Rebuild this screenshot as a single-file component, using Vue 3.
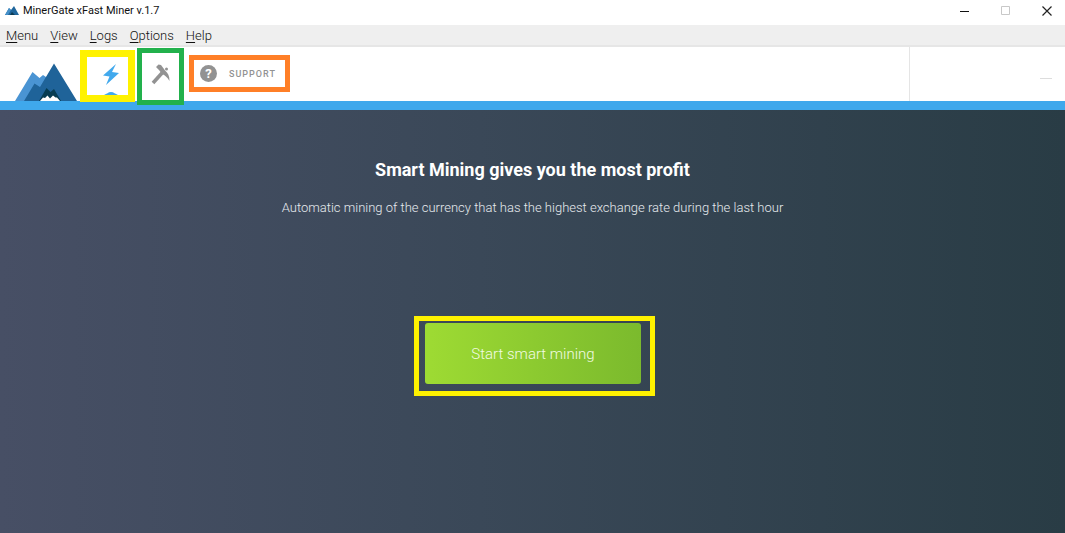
<script setup>
const menus = ['Menu', 'View', 'Logs', 'Options', 'Help']
</script>

<template>
  <div class="window">
    <header class="titlebar">
      <svg class="app-icon" viewBox="0 0 14 9" aria-hidden="true">
        <path d="M0 9 4 2 6 4 9 0 14 9Z" fill="#1f669c" />
        <path d="M0 9 4 2 6 4 3 9Z" fill="#4590c9" />
        <path d="M5 9 7 6 9 8 10 9Z" fill="#0c3c55" />
      </svg>
      <span class="app-title">MinerGate xFast Miner v.1.7</span>
      <div class="window-controls">
        <button type="button" aria-label="Minimize">
          <svg width="10" height="10" viewBox="0 0 10 10"><path d="M0 5.5H9" stroke="#111" /></svg>
        </button>
        <button type="button" aria-label="Maximize" disabled>
          <svg width="10" height="10" viewBox="0 0 10 10"><path d="M.5 .5H8.500V8.500H.5Z" fill="none" stroke="#c8c8c8" /></svg>
        </button>
        <button type="button" aria-label="Close">
          <svg width="10" height="10" viewBox="0 0 10 10"><path d="M.5 .5 9.500 9.500M9.500 .5 .5 9.500" stroke="#222" stroke-width="1.200" /></svg>
        </button>
      </div>
    </header>

    <nav class="menubar" aria-label="Application menu">
      <button v-for="m in menus" :key="m" type="button"><u>{{ m[0] }}</u>{{ m.slice(1) }}</button>
    </nav>

    <div class="toolbar">
      <svg class="logo" viewBox="0 0 62 38" role="img" aria-label="MinerGate">
        <path d="M0 38 17.500 9 24.500 15 28 12 34 16 30 38Z" fill="#4a94d3" />
        <path d="M9 38 19.500 20.500 25 24 39 .5 62 38Z" fill="#1f6399" />
        <path d="M24 38 31.500 25 35.500 29 39 26 46 38Z" fill="#063c52" />
        <path d="M25 38 28 34.500 30 35 32.500 32.500 35 35.500 38 32.500 40.500 34.500 42 34.500 45 38Z" fill="#fff" />
      </svg>
      <button class="tab smart" type="button" aria-label="Smart mining">
        <svg class="bolt" viewBox="0 0 16 21" aria-hidden="true">
          <path d="M13 0 0 11.500 6.500 12.500 3 21 16 9 9 8Z" fill="#42a9ed" />
        </svg>
        <svg class="marker" viewBox="0 0 14 4" aria-hidden="true">
          <path d="M0 4C3 3 4 1 7 1S11 3 14 4Z" fill="#42a9ed" />
        </svg>
      </button>
      <button class="tab miner" type="button" aria-label="Miner">
        <svg class="pick" viewBox="0 0 20 21" aria-hidden="true">
          <path d="M2 19 11 9" stroke="#929292" stroke-width="3.600" fill="none" />
          <path d="M5 3 7.500 .5 10 1 13 5 14 6.500C17 9 18.500 12 18.500 17C16 13 14 11 11 10L8 6Z" fill="#929292" />
          <circle cx="15.500" cy="5" r="1.500" fill="#929292" />
        </svg>
      </button>
      <button class="tab support" type="button">
        <span class="help" aria-hidden="true">?</span>
        <span>SUPPORT</span>
      </button>
      <aside class="account"><span class="dash"></span></aside>
    </div>

    <main class="stage">
      <h1>Smart Mining gives you the most profit</h1>
      <p>Automatic mining of the currency that has the highest exchange rate during the last hour</p>
      <div class="callout">
        <button class="start" type="button">Start smart mining</button>
      </div>
    </main>
  </div>
</template>

<style>
body {
  margin: 0;
}
</style>

<style scoped>
.window {
  display: flex;
  flex-direction: column;
  min-height: 100vh;
  background: #fff;
  font-family: Roboto, "Liberation Sans", sans-serif;
}
button {
  box-sizing: border-box;
  margin: 0;
  padding: 0;
  border: 0;
  background: none;
  font: inherit;
  color: inherit;
}
svg {
  display: block;
}
.titlebar {
  display: flex;
  align-items: center;
  height: 25px;
  padding: 0 13px 4px 5px;
  box-sizing: border-box;
}
.app-icon {
  width: 14px;
  height: 9px;
}
.app-title {
  margin-left: 4px;
  font-size: 11px;
  line-height: 16px;
  color: #111;
}
.window-controls {
  display: flex;
  gap: 31px;
  margin-left: auto;
}
.menubar {
  display: flex;
  gap: 12px;
  height: 22px;
  padding: 1px 6px 0;
  box-sizing: border-box;
  border-bottom: 2px solid #e6e6e6;
  background: #efefef;
  font-size: 13px;
  font-weight: 300;
  line-height: 19px;
  color: #111;
}
.menubar u {
  text-underline-offset: 2px;
}
.toolbar {
  display: flex;
  align-items: flex-start;
  height: 54px;
  padding-left: 15px;
  border-bottom: 9px solid #3fa8ec;
}
.logo {
  align-self: flex-end;
  width: 62px;
  height: 38px;
}
.tab {
  flex: none;
  background: #fff;
}
.smart {
  display: flex;
  flex-direction: column;
  align-items: center;
  justify-content: space-between;
  width: 55px;
  height: 52px;
  margin: 3px 0 0 3px;
  padding: 7px 0 0 7px;
  border: 7px solid #fff200;
}
.bolt {
  width: 16px;
  height: 21px;
}
.marker {
  width: 14px;
  height: 4px;
}
.miner {
  width: 47px;
  height: 57px;
  margin: 1px 0 0 2px;
  padding: 11px 0 0 9px;
  border: 5px solid #22b14c;
}
.miner .pick {
  width: 20px;
  height: 21px;
  margin-bottom: 15px;
}
.support {
  display: flex;
  align-items: center;
  gap: 12px;
  width: 101px;
  height: 37px;
  margin: 8px 0 0 5px;
  padding-left: 6px;
  border: 5px solid #ff7f27;
  font-size: 9px;
  font-weight: 500;
  letter-spacing: 1px;
  color: #929292;
}
.help {
  width: 17px;
  height: 17px;
  border-radius: 50%;
  background: #929292;
  color: #fff;
  font-size: 13px;
  font-weight: 700;
  line-height: 17px;
  letter-spacing: 0;
  text-align: center;
}
.account {
  display: flex;
  justify-content: flex-end;
  align-self: stretch;
  width: 155px;
  margin-left: auto;
  border-left: 1px solid #e5e5e5;
}
.dash {
  width: 12px;
  height: 1px;
  margin: 31px 13px 0 0;
  background: #ddd;
}
.stage {
  flex: 1;
  display: flex;
  flex-direction: column;
  align-items: center;
  padding-top: 48px;
  background: linear-gradient(90deg, #474f65 0%, #3a4858 45%, #293c45 100%);
  color: #fff;
  text-align: center;
}
h1 {
  margin: 0;
  font-size: 18px;
  font-weight: 700;
  line-height: 24px;
}
p {
  margin: 16px 0 0;
  font-size: 13px;
  font-weight: 300;
  line-height: 20px;
  color: #e6eaee;
}
.callout {
  margin: 98px 0 0 4px;
  padding: 2px 9px 7px 6px;
  border: 5px solid #fff200;
}
.start {
  display: block;
  width: 216px;
  height: 61px;
  border-radius: 3px;
  background: linear-gradient(90deg, #9edb33, #7bba2d);
  font-size: 15px;
  font-weight: 300;
  color: #f2fbe3;
}
</style>
